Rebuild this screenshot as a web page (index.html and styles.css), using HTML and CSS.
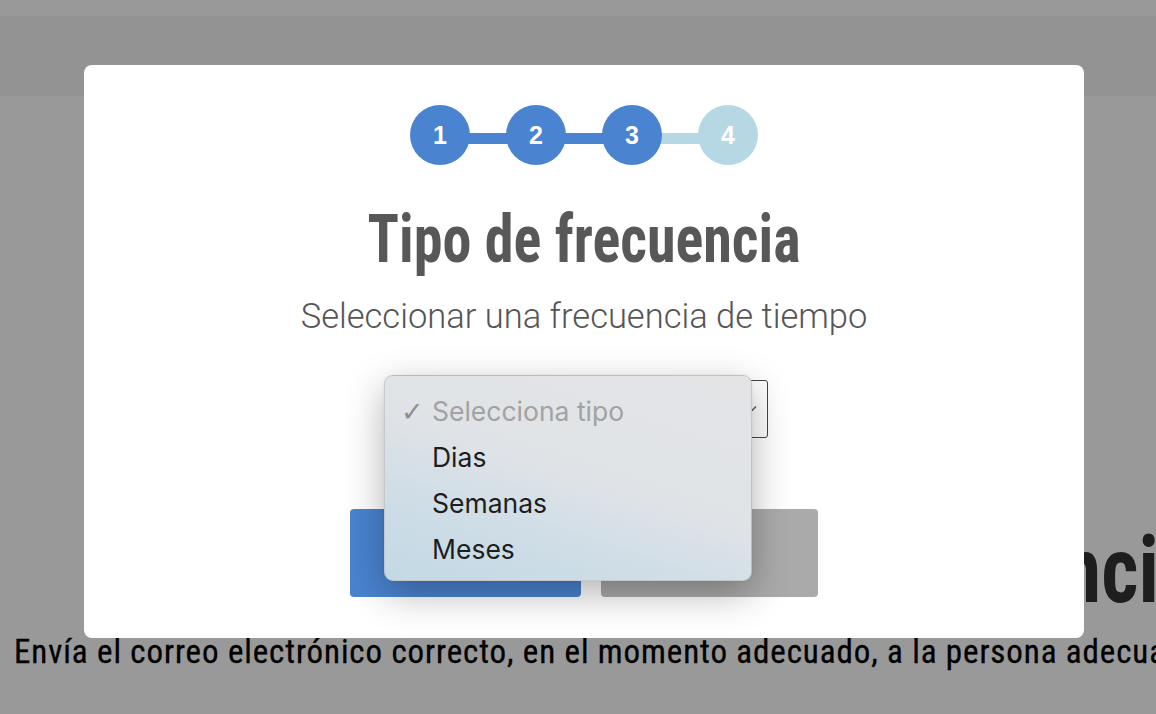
FILE: index.html
```html
<!DOCTYPE html>
<html lang="es">
<head>
<meta charset="utf-8">
<title>Tipo de frecuencia</title>
<link rel="stylesheet" href="styles.css">
</head>
<body>
  <header class="site-header"></header>
  <main class="hero">
    <h1 class="hero-title">Email por frecuencia</h1>
    <p class="hero-lead">Envía el correo electrónico correcto, en el momento adecuado, a la persona adecuada.</p>
  </main>

  <div class="overlay"></div>

  <section class="modal">
    <div class="stepper">
      <span class="step step-done">1</span>
      <span class="link link-done"></span>
      <span class="step step-done">2</span>
      <span class="link link-done"></span>
      <span class="step step-done">3</span>
      <span class="link"></span>
      <span class="step">4</span>
    </div>
    <h2 class="modal-title">Tipo de frecuencia</h2>
    <p class="modal-subtitle">Seleccionar una frecuencia de tiempo</p>
    <div class="select-box">
      <span class="select-value">Selecciona tipo</span>
      <svg class="select-chevron" width="12" height="8" viewBox="0 0 12 8"><path d="M1 1.5 L6 6.5 L11 1.5" fill="none" stroke="#555555" stroke-width="1.3"/></svg>
    </div>
    <div class="actions">
      <button class="btn btn-primary">Siguiente</button>
      <button class="btn btn-secondary">Atrás</button>
    </div>

    <ul class="popup">
      <li class="popup-item popup-item-placeholder"><span class="popup-check">✓</span>Selecciona tipo</li>
      <li class="popup-item">Dias</li>
      <li class="popup-item">Semanas</li>
      <li class="popup-item">Meses</li>
    </ul>
  </section>
</body>
</html>
```
FILE: styles.css
```css
html, body {
  margin: 0;
  padding: 0;
  overflow: hidden;
}

body {
  background: #ffffff;
  font-family: "Roboto", "Liberation Sans", sans-serif;
  width: 1156px;
  height: 714px;
}

.site-header {
  margin-top: 16px;
  height: 80px;
  background: #f5f5f5;
}

.hero {
  padding: 429px 0 0 14px;
}

.hero-title {
  margin: 0;
  width: 1183px;
  text-align: right;
  white-space: nowrap;
  font-family: "Roboto Condensed", "Liberation Sans Narrow", "DejaVu Sans Condensed", sans-serif;
  font-stretch: condensed;
  font-weight: 700;
  font-size: 92px;
  line-height: 1;
  color: #333333;
  transform: scaleX(0.88);
  transform-origin: right center;
}

.hero-lead {
  margin: 15px 0 0;
  white-space: nowrap;
  font-family: "Roboto Condensed", "Liberation Sans Narrow", "DejaVu Sans Condensed", sans-serif;
  font-stretch: condensed;
  font-weight: 400;
  font-size: 33px;
  letter-spacing: 0.9px;
  line-height: 1.2;
  color: #000000;
  -webkit-text-stroke: 0.3px #000000;
}

.overlay {
  position: fixed;
  inset: 0;
  background: rgba(0, 0, 0, 0.4);
}

.modal {
  position: fixed;
  top: 65px;
  left: 84px;
  width: 1000px;
  box-sizing: border-box;
  padding: 40px 0 41px;
  background: #ffffff;
  border-radius: 8px;
  display: flex;
  flex-direction: column;
  align-items: center;
}

.stepper {
  display: flex;
  align-items: flex-start;
}

.step {
  width: 60px;
  height: 60px;
  border-radius: 50%;
  background: #b6d8e5;
  color: #ffffff;
  font-family: "Liberation Sans", Arial, sans-serif;
  font-weight: 700;
  font-size: 25px;
  display: flex;
  align-items: center;
  justify-content: center;
  position: relative;
  z-index: 1;
}

.step-done {
  background: #4a83d0;
}

.link {
  width: 40px;
  height: 11px;
  margin: 28px -2px 0;
  background: #b6d8e5;
}

.link-done {
  background: #4a83d0;
}

.modal-title {
  margin: 35px 0 0;
  font-family: "Roboto Condensed", "Liberation Sans Narrow", "DejaVu Sans Condensed", sans-serif;
  font-stretch: condensed;
  font-weight: 700;
  font-size: 66px;
  line-height: 1.2;
  color: #585858;
  transform: scaleX(0.88);
}

.modal-subtitle {
  margin: 17px 0 0;
  font-family: "Roboto", sans-serif;
  font-weight: 300;
  font-size: 34.5px;
  line-height: 1.2;
  color: #555555;
}

.select-box {
  margin-top: 42px;
  width: 368px;
  height: 58px;
  box-sizing: border-box;
  border: 1px solid #444444;
  border-radius: 3px;
  display: flex;
  align-items: center;
  justify-content: space-between;
  padding: 0 10px 0 16px;
}

.select-value {
  font-family: "Inter", sans-serif;
  font-size: 22px;
  color: #333333;
}

.select-chevron {
  display: block;
}

.actions {
  margin-top: 71px;
  display: flex;
  gap: 20px;
}

.btn {
  height: 88px;
  border: 0;
  border-radius: 4px;
  color: #ffffff;
  font-family: "Roboto", sans-serif;
  font-size: 20px;
}

.btn-primary {
  width: 231px;
  background: #4a83d0;
}

.btn-secondary {
  width: 217px;
  background: #aaaaaa;
}

.popup {
  position: absolute;
  top: 310px;
  left: 300px;
  width: 368px;
  box-sizing: border-box;
  margin: 0;
  padding: 12px 0 8px;
  list-style: none;
  border-radius: 9px;
  border: 1px solid rgba(0, 0, 0, 0.12);
  background: linear-gradient(18deg, #c2d9e5 0%, #cfdde6 28%, #dfe3e7 52%, #e4e4e6 100%);
  box-shadow: 0 12px 38px rgba(0, 0, 0, 0.3), 0 0 2px rgba(0, 0, 0, 0.1);
}

.popup-item {
  height: 46px;
  display: flex;
  align-items: center;
  padding-left: 47px;
  position: relative;
  font-family: "Inter", "Noto Sans", sans-serif;
  font-size: 26.5px;
  color: #1e1e1e;
}

.popup-item-placeholder {
  color: #a2a2a4;
}

.popup-check {
  position: absolute;
  left: 16px;
  font-family: "DejaVu Sans", sans-serif;
  font-size: 27px;
  font-weight: 700;
  color: #8e8e90;
}
```
